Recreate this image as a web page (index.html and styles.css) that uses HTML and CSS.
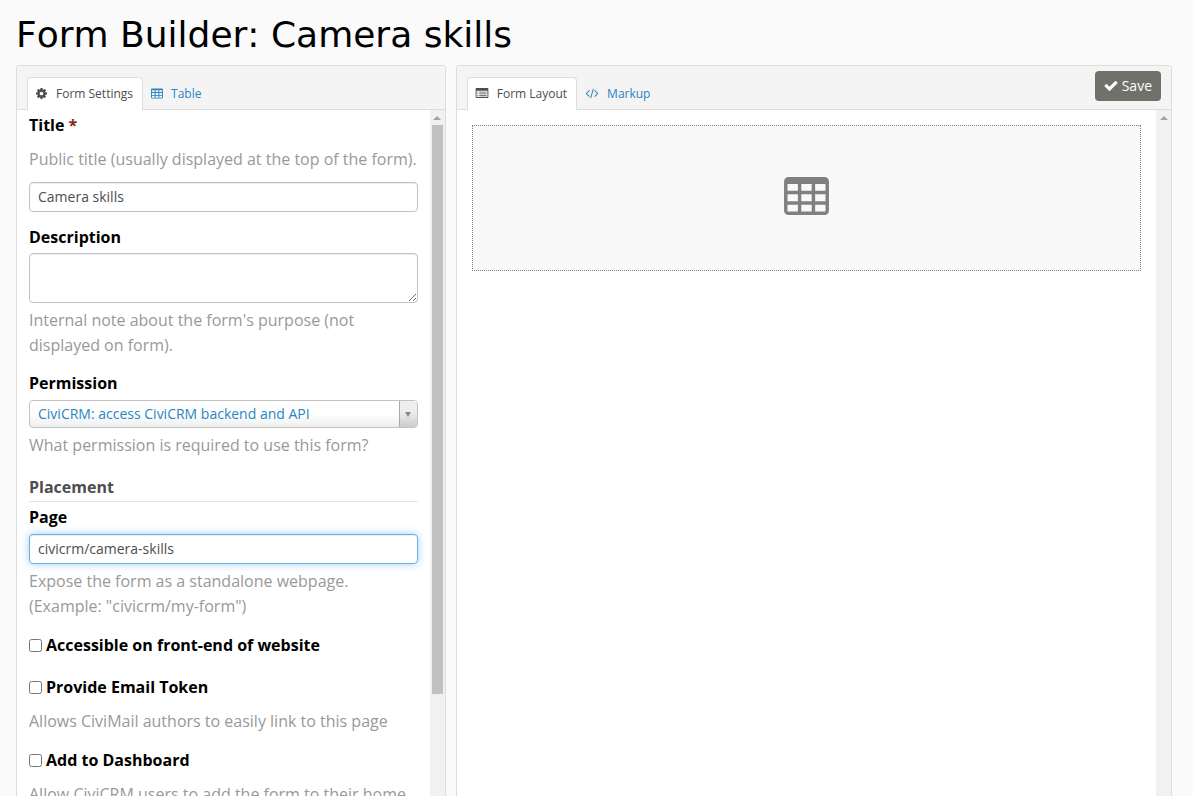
FILE: index.html
```html
<!DOCTYPE html>
<html lang="en">
<head>
<meta charset="utf-8">
<title>Form Builder: Camera skills</title>
<link rel="stylesheet" href="styles.css">
</head>
<body>
<svg class="sprite" aria-hidden="true">
  <symbol id="i-cog" viewBox="128 128 1536 1536"><path d="M1152 896q0-106-75-181t-181-75-181 75-75 181 75 181 181 75 181-75 75-181zm512-109v222q0 12-8 23t-20 13l-185 28q-19 54-39 91 35 50 107 138 10 12 10 25t-9 23q-27 37-99 108t-94 71q-12 0-26-9l-138-108q-44 23-91 38-16 136-29 186-7 28-36 28h-222q-14 0-24.5-8.5t-11.5-21.5l-28-184q-49-16-90-37l-141 107q-10 9-25 9-14 0-25-11-126-114-165-168-7-10-7-23 0-12 8-23 15-21 51-66.5t54-70.5q-27-50-41-99l-183-27q-13-2-21-12.5t-8-23.5v-222q0-12 8-23t19-13l186-28q14-46 39-92-40-57-107-138-10-12-10-24 0-10 9-23 26-36 98.500-107.500t94.500-71.500q13 0 26 10l138 107q44-23 91-38 16-136 29-186 7-28 36-28h222q14 0 24.500 8.500t11.500 21.500l28 184q49 16 90 37l142-107q9-9 24-9 13 0 25 10 129 119 165 170 7 8 7 22 0 12-8 23-15 21-51 66.500t-54 70.500q26 50 41 98l183 28q13 2 21 12.500t8 23.500z"/></symbol>
  <symbol id="i-table" viewBox="0 0 1664 1408"><path fill-rule="evenodd" d="M160 0H1504A160 160 0 0 1 1664 160V1248A160 160 0 0 1 1504 1408H160A160 160 0 0 1 0 1248V160A160 160 0 0 1 160 0ZM128 256V512H512V256ZM640 256V512H1024V256ZM1152 256V512H1536V256ZM128 640V896H512V640ZM640 640V896H1024V640ZM1152 640V896H1536V640ZM128 1024V1280H512V1024ZM640 1024V1280H1024V1024ZM1152 1024V1280H1536V1024Z"/></symbol>
  <symbol id="i-list" viewBox="0 0 14 11"><path fill-rule="evenodd" d="M1 0H13Q14 0 14 1V10Q14 11 13 11H1Q0 11 0 10V1Q0 0 1 0ZM1 3V10H13V3ZM2 4H3V5H2ZM4 4H12V5H4ZM2 6H3V7H2ZM4 6H12V7H4ZM2 8H3V9H2ZM4 8H12V9H4Z"/></symbol>
  <symbol id="i-code" viewBox="0 0 14 12"><path fill="none" stroke="currentColor" stroke-width="1.100" d="M4.200 2.500L.800 6l3.400 3.500M9.800 2.500L13.200 6l-3.400 3.500M8.500 1L5.500 11"/></symbol>
  <symbol id="i-check" viewBox="121 334 1550 1188"><path d="M1671 566q0 40-28 68l-724 724-136 136q-28 28-68 28t-68-28l-136-136-362-362q-28-28-28-68t28-68l136-136q28-28 68-28t68 28l294 295 656-657q28-28 68-28t68 28l136 136q28 28 28 68z"/></symbol>
</svg>
<main class="page">
  <h1 class="page-title">Form Builder: Camera skills</h1>
  <div class="editor">
    <section class="panel">
      <header class="panel-head">
        <nav class="tabs">
          <a class="tab active" href="#settings"><svg class="icon icon-cog"><use href="#i-cog"/></svg>Form Settings</a>
          <a class="tab" href="#table"><svg class="icon icon-table"><use href="#i-table"/></svg>Table</a>
        </nav>
      </header>
      <div class="panel-body">
        <form class="settings" id="settings">
          <label class="label" for="title">Title <span class="required">*</span></label>
          <p class="help above">Public title (usually displayed at the top of the form).</p>
          <input class="control" id="title" type="text" value="Camera skills">

          <label class="label spaced" for="description">Description</label>
          <textarea class="control area" id="description"></textarea>
          <p class="help">Internal note about the form's purpose (not displayed on form).</p>

          <label class="label spaced" for="permission">Permission</label>
          <div class="picker">
            <select class="picker-select" id="permission"><option>CiviCRM: access CiviCRM backend and API</option></select>
            <span class="picker-arrow"></span>
          </div>
          <p class="help">What permission is required to use this form?</p>

          <fieldset class="placement">
            <legend class="legend">Placement</legend>
            <label class="label" for="route">Page</label>
            <input class="control focused" id="route" type="text" value="civicrm/camera-skills">
            <p class="help">Expose the form as a standalone webpage. (Example: "civicrm/my-form")</p>
            <label class="check"><input class="box" type="checkbox">Accessible on front-end of website</label>
            <label class="check"><input class="box" type="checkbox">Provide Email Token</label>
            <p class="help after-check">Allows CiviMail authors to easily link to this page</p>
            <label class="check"><input class="box" type="checkbox">Add to Dashboard</label>
            <p class="help after-check">Allow CiviCRM users to add the form to their home dashboard.</p>
          </fieldset>
        </form>
        <div class="scrollbar"><span class="scroll-up"></span><span class="scroll-thumb"></span></div>
      </div>
    </section>

    <section class="panel">
      <header class="panel-head">
        <nav class="tabs">
          <a class="tab active" href="#layout"><svg class="icon icon-list"><use href="#i-list"/></svg>Form Layout</a>
          <a class="tab" href="#markup"><svg class="icon icon-code"><use href="#i-code"/></svg>Markup</a>
        </nav>
        <button class="save" type="button"><svg class="icon-check"><use href="#i-check"/></svg>Save</button>
      </header>
      <div class="panel-body">
        <div class="canvas" id="layout">
          <div class="block"><svg class="icon-block"><use href="#i-table"/></svg></div>
        </div>
        <div class="scrollbar"><span class="scroll-up"></span></div>
      </div>
    </section>
  </div>
</main>
</body>
</html>
```
FILE: styles.css
```css
* { box-sizing: border-box; }

body {
  margin: 0;
  background: #fafafa;
  color: #000;
  font: 16px/25px "Open Sans", sans-serif;
}

svg { display: block; fill: currentColor; }
.sprite { display: none; }

.page {
  display: flex;
  flex-direction: column;
  height: 100vh;
  padding: 0 21px 0 16px;
  overflow: hidden;
}

.page-title {
  flex: none;
  margin: 0;
  padding: 14px 0 9px;
  font: 400 36px/42px Verdana, "DejaVu Sans", sans-serif;
  font-kerning: none;
}

.editor {
  flex: 1;
  display: grid;
  grid-template-columns: 3fr 5fr;
  gap: 10px;
  min-height: 0;
}

.panel {
  display: flex;
  flex-direction: column;
  min-width: 0;
  min-height: 0;
  background: #fff;
  border: 1px solid #ddd;
  border-bottom: 0;
  border-radius: 4px 4px 0 0;
}

.panel-head {
  flex: none;
  display: flex;
  justify-content: space-between;
  height: 44px;
  padding: 0 10px;
  background: #f4f4f4;
  border-bottom: 1px solid #ddd;
  border-radius: 3px 3px 0 0;
}

.tabs { display: flex; align-items: flex-end; margin-bottom: -1px; }

.tab {
  display: flex;
  align-items: center;
  gap: 8px;
  height: 33px;
  padding: 0 9px 2px 7px;
  border: 1px solid transparent;
  border-bottom: 0;
  border-radius: 4px 4px 0 0;
  color: #2786c2;
  font-size: 12px;
  text-decoration: none;
}

.tab.active { background: #fff; border-color: #ddd; color: #4d4d4d; }

.icon { flex: none; height: 11px; }
.icon-cog { width: 13px; }
.icon-table { width: 12px; }
.icon-list { width: 14px; height: 10px; }
.icon-code { width: 14px; }

.save {
  display: flex;
  align-items: center;
  gap: 4px;
  height: 30px;
  margin-top: 5px;
  padding: 0 9px;
  background: #70716b;
  border: 0;
  border-radius: 4px;
  color: #fff;
  font: 14px/20px "Open Sans", sans-serif;
}
.icon-check { width: 14px; height: 10px; }

.panel-body { flex: 1; display: flex; min-height: 0; overflow: hidden; }

.settings { flex: 1; min-width: 0; padding: 3px 12px 0; }

.label { display: block; font-weight: 700; margin-bottom: 4px; }
.label.spaced { margin: 13px 0 3px; }
.required { color: #8a1f11; }

.help { margin: 5px 0 0; color: #999; }
.help.above { margin: 9px 0 10px; }

.control {
  display: block;
  width: 100%;
  height: 30px;
  padding: 3px 8px 5px;
  background: #fff;
  border: 1px solid #c2c2c2;
  border-radius: 4px;
  box-shadow: inset 0 1px 1px rgba(0, 0, 0, .075);
  color: #4d4d4d;
  font: 14px/20px "Open Sans", sans-serif;
  outline: 0;
}
.control.area { height: 50px; resize: vertical; }
.control.focused {
  border-color: #66afe9;
  box-shadow: inset 0 1px 1px rgba(0, 0, 0, .075), 0 0 8px rgba(102, 175, 233, .6);
}

.picker {
  display: flex;
  height: 28px;
  margin-top: 4px;
  border: 1px solid #c2c2c2;
  border-radius: 4px;
  background: linear-gradient(to top, #eee 0%, #fff 50%);
  overflow: hidden;
}
.picker-select {
  flex: 1;
  min-width: 0;
  padding: 0 8px;
  appearance: none;
  background: transparent;
  border: 0;
  color: #2786c2;
  font: 14px/26px "Open Sans", sans-serif;
}
.picker-arrow {
  display: flex;
  align-items: center;
  justify-content: center;
  width: 18px;
  border-left: 1px solid #aaa;
  background: linear-gradient(to top, #ccc 0%, #eee 60%);
}
.picker-arrow::before {
  content: "";
  border: 3px solid transparent;
  border-top: 5px solid #888;
  border-bottom: 0;
}

.placement { min-width: 0; margin: 17px 0 0; padding: 0; border: 0; }
.legend {
  width: 100%;
  margin-bottom: 3px;
  padding: 0 0 1px;
  border-bottom: 1px solid #e5e5e5;
  color: #4d4d4d;
  font-weight: 700;
}

.check { display: flex; align-items: center; gap: 4px; margin-top: 14px; font-weight: 700; }
.check + .check { margin-top: 17px; }
.box { width: 13px; height: 13px; margin: 0 0 1px; }
.help.after-check { margin-top: 9px; }

.scrollbar {
  flex: none;
  display: flex;
  flex-direction: column;
  align-items: center;
  width: 15px;
  background: #f1f1f1;
}
.scroll-up { height: 15px; padding-top: 6px; }
.scroll-up::before {
  content: "";
  display: block;
  border: 4px solid transparent;
  border-bottom-color: #a3a3a3;
  border-top: 0;
}
.scroll-thumb { width: 11px; height: 83%; background: #c1c1c1; }

.canvas { flex: 1; min-width: 0; padding: 15px; }
.block {
  display: flex;
  align-items: center;
  justify-content: center;
  height: 146px;
  padding-bottom: 4px;
  background: #f9f9f9;
  border: 1px dotted #808080;
  color: #808080;
}
.icon-block { width: 45px; height: 38px; }
```
